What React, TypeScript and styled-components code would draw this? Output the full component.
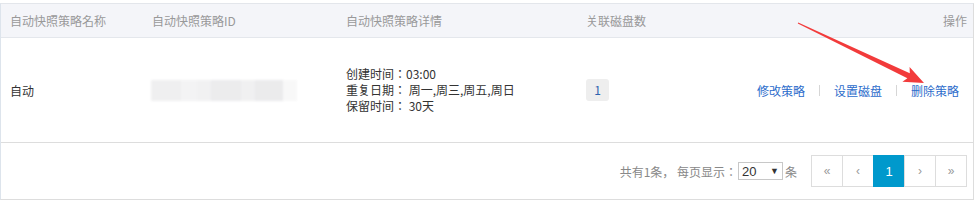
import * as React from 'react'
import styled, { createGlobalStyle } from 'styled-components'

const GlobalStyle = createGlobalStyle`
  body {
    margin: 0;
    background: #fff;
    font-family: "Noto Sans CJK JP", "Noto Sans CJK SC", "Liberation Sans", sans-serif;
    font-size: 12px;
    color: #333;
  }
`

const Page = styled.div`
  position: relative;
  width: 976px;
  padding-top: 3px;
`

const Table = styled.div`
  width: 974px;
  border-top: 1px solid #e3e6eb;
  border-left: 1px solid #dde4ec;
  border-right: 1px solid #dddddd;
  border-bottom: 1px solid #dddddd;
  box-sizing: border-box;
`

const Row = styled.div<{ $head?: boolean }>`
  display: grid;
  grid-template-columns: 142px 194px 240px 180px 1fr;
  align-items: center;
  height: ${p => (p.$head ? '33px' : '104px')};
  background: ${p => (p.$head ? '#f4f5f9' : '#fff')};
  border-bottom: 1px solid ${p => (p.$head ? '#e4e7ec' : '#dddddd')};
  color: ${p => (p.$head ? '#999' : '#333')};
`

const Cell = styled.div<{ $right?: boolean; $pr?: number }>`
  padding-left: 9px;
  padding-right: ${p => p.$pr ?? 0}px;
  text-align: ${p => (p.$right ? 'right' : 'left')};
  white-space: nowrap;
`

const Masked = styled.div`
  display: flex;
  width: 146px;
  height: 21px;
  margin-left: -1px;
  filter: blur(1.2px);
  opacity: 0.9;
`

const MaskBlock = styled.span<{ $shade: string; $w: number }>`
  display: block;
  width: ${p => p.$w}px;
  height: 100%;
  background: ${p => p.$shade};
`

const Detail = styled.div`
  line-height: 16px;
`

const Badge = styled.span`
  display: inline-block;
  width: 23px;
  height: 22px;
  line-height: 22px;
  text-align: center;
  border-radius: 3px;
  background: #eeeeee;
  color: #2d63ae;
`

const Actions = styled.div`
  display: flex;
  justify-content: flex-end;
  align-items: center;
  padding-right: 14px;
`

const ActionLink = styled.a`
  color: #2c6ccb;
  text-decoration: none;
  cursor: pointer;
`

const Sep = styled.span`
  display: inline-block;
  width: 1px;
  height: 11px;
  margin: 0 14px;
  background: #d6d6d6;
`

const Footer = styled.div`
  display: flex;
  justify-content: flex-end;
  align-items: center;
  height: 56px;
  padding-right: 6px;
  color: #888;
`

const PageSize = styled.span`
  display: inline-flex;
  align-items: center;
  justify-content: space-between;
  box-sizing: border-box;
  width: 45px;
  height: 18px;
  margin: 0 2px 0 1px;
  padding: 0 3px 0 3px;
  border: 1px solid #c8c8c8;
  color: #333;
  font-size: 13px;
  font-family: "Liberation Sans", sans-serif;
`

const Caret = styled.span`
  font-size: 9px;
  color: #333;
`

const Pager = styled.div`
  display: flex;
  margin-left: 15px;
`

const PageBtn = styled.span<{ $active?: boolean }>`
  display: flex;
  align-items: center;
  justify-content: center;
  box-sizing: border-box;
  width: 32px;
  height: 32px;
  margin-left: -1px;
  border: 1px solid ${p => (p.$active ? '#0099cc' : '#dddddd')};
  background: ${p => (p.$active ? '#0099cc' : '#fff')};
  color: ${p => (p.$active ? '#fff' : '#999')};
  font-family: "Liberation Sans", sans-serif;
  font-size: ${p => (p.$active ? '13px' : '12px')};
`

const Arrow = styled.svg`
  position: absolute;
  left: 0;
  top: 0;
  pointer-events: none;
`

const maskShades: [string, number][] = [
  ['#eeeeef', 30],
  ['#f2f2f3', 16],
  ['#f0f0f1', 14],
  ['#eaeaec', 30],
  ['#efeff0', 14],
  ['#e9e9eb', 28],
  ['#f8f8f8', 14],
]

export default function App() {
  return (
    <Page>
      <GlobalStyle />
      <Table>
        <Row $head>
          <Cell>自动快照策略名称</Cell>
          <Cell>自动快照策略ID</Cell>
          <Cell>自动快照策略详情</Cell>
          <Cell>关联磁盘数</Cell>
          <Cell $right $pr={6}>操作</Cell>
        </Row>
        <Row>
          <Cell>自动</Cell>
          <Cell>
            <Masked>
              {maskShades.map(([shade, w], i) => (
                <MaskBlock key={i} $shade={shade} $w={w} />
              ))}
            </Masked>
          </Cell>
          <Cell>
            <Detail>创建时间：03:00</Detail>
            <Detail>重复日期： 周一,周三,周五,周日</Detail>
            <Detail>保留时间： 30天</Detail>
          </Cell>
          <Cell>
            <Badge>1</Badge>
          </Cell>
          <Actions>
            <ActionLink>修改策略</ActionLink>
            <Sep />
            <ActionLink>设置磁盘</ActionLink>
            <Sep />
            <ActionLink>删除策略</ActionLink>
          </Actions>
        </Row>
        <Footer>
          共有1条， 每页显示：
          <PageSize>
            20 <Caret>▼</Caret>
          </PageSize>
          条
          <Pager>
            <PageBtn>«</PageBtn>
            <PageBtn>‹</PageBtn>
            <PageBtn $active>1</PageBtn>
            <PageBtn>›</PageBtn>
            <PageBtn>»</PageBtn>
          </Pager>
        </Footer>
      </Table>
      <Arrow width="976" height="202" viewBox="0 0 976 202">
        <polygon
          points="797.8,23.4 907.4,78.2 902.4,81.8 924,83 909.6,67.0 909.8,73.2 798.2,22.6"
          fill="#f23b3b"
        />
      </Arrow>
    </Page>
  )
}
